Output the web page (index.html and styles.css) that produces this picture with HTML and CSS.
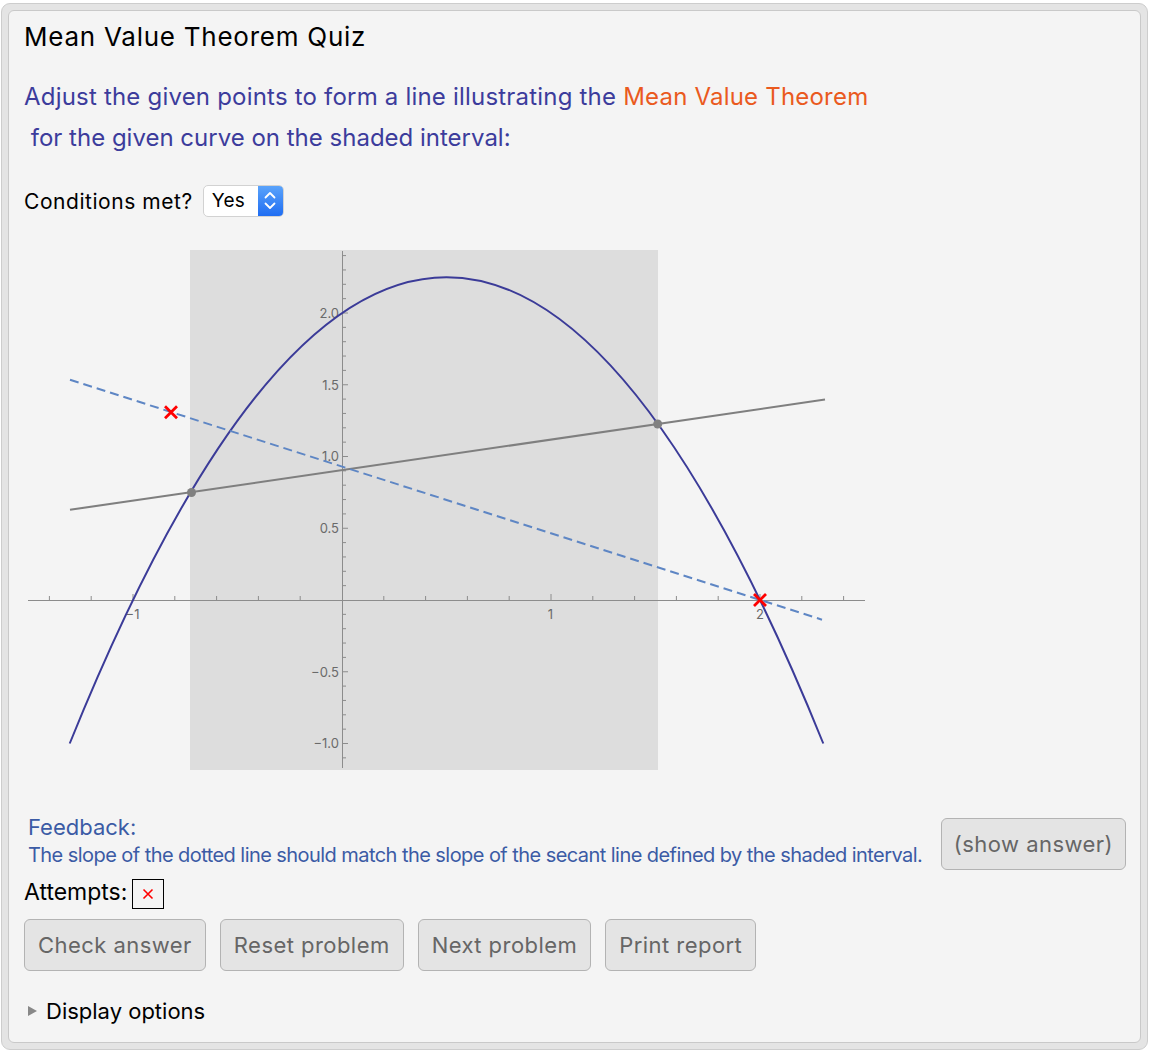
FILE: index.html
```html
<!DOCTYPE html>
<html>
<head>
<meta charset="utf-8">
<title>Mean Value Theorem Quiz</title>
<link rel="stylesheet" href="styles.css">
</head>
<body>
<div class="frame">
  <div class="panel">
    <h1 class="title">Mean Value Theorem Quiz</h1>
    <p class="intro"><span class="intro-first">Adjust the given points to form a line illustrating the <span class="mvt">Mean Value Theorem</span></span><br>&nbsp;for the given curve on the shaded interval:</p>
    <div class="conditions">
      <span class="cond-label">Conditions met?</span>
      <div class="select">
        <span class="sel-val">Yes</span>
        <span class="stepper">
          <svg width="12" height="22" viewBox="0 0 12 22"><path d="M1.5 7.5 6 3l4.5 4.5M1.5 13.5 6 18l4.5-4.5" fill="none" stroke="#fff" stroke-width="1.8" stroke-linecap="round" stroke-linejoin="round"/></svg>
        </span>
      </div>
    </div>
    <svg class="plot" width="860" height="530" viewBox="24 245 860 530">
      <rect x="190" y="250" width="468" height="520" fill="#dddddd"/>
      <g stroke="#8c8c8c" stroke-width="1" fill="none">
        <path d="M28 600.5H865M342.5 251V768"/>
        <path d="M49.4 600v-4M91.2 600v-4M133 600v-6M174.8 600v-4M216.6 600v-4M258.4 600v-4M300.2 600v-4M383.8 600v-4M425.6 600v-4M467.4 600v-4M509.2 600v-4M551 600v-6M592.8 600v-4M634.6 600v-4M676.4 600v-4M718.2 600v-4M760 600v-6M801.8 600v-4M843.6 600v-4"/>
        <path d="M342.5 757.85h3.5M342.5 743.5h5.5M342.5 729.15h3.5M342.5 714.8h3.5M342.5 700.45h3.5M342.5 686.1h3.5M342.5 671.75h5.5M342.5 657.4h3.5M342.5 643.05h3.5M342.5 628.7h3.5M342.5 614.35h3.5M342.5 585.65h3.5M342.5 571.3h3.5M342.5 556.95h3.5M342.5 542.6h3.5M342.5 528.25h5.5M342.5 513.9h3.5M342.5 499.55h3.5M342.5 485.2h3.5M342.5 470.85h3.5M342.5 456.5h5.5M342.5 442.15h3.5M342.5 427.8h3.5M342.5 413.45h3.5M342.5 399.1h3.5M342.5 384.75h5.5M342.5 370.4h3.5M342.5 356.05h3.5M342.5 341.7h3.5M342.5 327.35h3.5M342.5 313h5.5M342.5 298.65h3.5M342.5 284.3h3.5M342.5 269.95h3.5M342.5 255.6h3.5"/>
      </g>
      <g class="tick-label" text-anchor="end">
        <text x="339" y="317.5">2.0</text>
        <text x="339" y="389.5">1.5</text>
        <text x="339" y="461">1.0</text>
        <text x="339" y="532.5">0.5</text>
        <text x="339" y="676.5">−0.5</text>
        <text x="339" y="748">−1.0</text>
      </g>
      <g class="tick-label" text-anchor="middle">
        <text x="132.5" y="618.5">−1</text>
        <text x="550.5" y="618.5">1</text>
        <text x="760" y="618.5">2</text>
      </g>
      <path d="M69.72 743.5Q446.5 -189.25 823.29 743.5" fill="none" stroke="#3b3b98" stroke-width="2"/>
      <path d="M70 509.8L825 399.6" stroke="#7f7f7f" stroke-width="2" fill="none"/>
      <path d="M70 379.8L822 619.7" stroke="#5e86c4" stroke-width="2" stroke-dasharray="9 5" fill="none"/>
      <circle cx="191.5" cy="492.5" r="4.5" fill="#808080"/>
      <circle cx="657.7" cy="424" r="4.5" fill="#808080"/>
      <g stroke="#ff0000" stroke-width="2.8" stroke-linecap="butt">
        <path d="M165 406.3l12 12M177 406.3l-12 12"/>
        <path d="M754 594l12 12M766 594l-12 12"/>
      </g>
    </svg>
    <div class="feedback-row">
      <div class="feedback">
        <div class="fb-label">Feedback:</div>
        <div class="fb-msg">The slope of the dotted line should match the slope of the secant line defined by the shaded interval.</div>
      </div>
      <button class="btn show">(show answer)</button>
    </div>
    <div class="attempts">
      <span>Attempts:</span>
      <span class="attempt-box"><svg width="12" height="12" viewBox="0 0 12 12"><path d="M1.5 1.5l9 9M10.5 1.5l-9 9" stroke="#ff0000" stroke-width="1.6"/></svg></span>
    </div>
    <div class="actions">
      <button class="btn">Check answer</button>
      <button class="btn">Reset problem</button>
      <button class="btn">Next problem</button>
      <button class="btn">Print report</button>
    </div>
    <div class="display"><span class="tri"></span>Display options</div>
  </div>
</div>
</body>
</html>
```
FILE: styles.css
```css
* { box-sizing: border-box; }
html, body { margin: 0; padding: 0; background: #ffffff; }
body { font-family: Inter, "Noto Sans", sans-serif; color: #000; }

.frame {
  margin: 3px 2px 3px 1px;
  border: 1px solid #cdcdcd;
  border-radius: 9px;
  background: #e4e4e4;
  padding: 6px;
}
.panel {
  border: 1px solid #c9c9c9;
  border-radius: 6px;
  background: #f4f4f4;
  padding: 10px 14px 17px 15px;
}
.title {
  margin: 0;
  font-size: 26px;
  line-height: 32px;
  font-weight: 400;
  letter-spacing: 0.75px;
}
.intro {
  margin: 23px 0 0;
  font-size: 24px;
  line-height: 41px;
  color: #3c3c9c;
  white-space: nowrap;
}
.intro-first { letter-spacing: 0.2px; }
.mvt { color: #ea5a1e; }

.conditions {
  display: flex;
  align-items: center;
  gap: 10px;
  margin-top: 27px;
  height: 32px;
  font-size: 21px;
  letter-spacing: 0.55px;
}
.select {
  display: flex;
  width: 81px;
  height: 32px;
  background: #fff;
  border: 1px solid #d2d2d2;
  border-radius: 5px;
  overflow: hidden;
  letter-spacing: 0.3px;
}
.sel-val { flex: 1; font-size: 19px; line-height: 30px; padding-left: 8px; }
.stepper {
  width: 25px;
  background: linear-gradient(#5aa3fb, #1f6df2);
  display: flex;
  align-items: center;
  justify-content: center;
}

.plot { display: block; margin-top: 28px; }
.tick-label text { font-family: Inter, "Noto Sans", sans-serif; font-size: 13px; fill: #6a6a6a; }

.feedback-row {
  display: flex;
  justify-content: space-between;
  align-items: flex-end;
  margin-top: 38px;
  padding-left: 4px;
}
.fb-label { font-size: 22px; line-height: 28px; color: #3b5ba5; }
.fb-msg { font-size: 20px; line-height: 28px; color: #3b5ba5; letter-spacing: -0.56px; }

.btn {
  font-family: inherit;
  font-size: 22px;
  height: 52px;
  padding: 0 13px;
  color: #666;
  background: #e4e4e4;
  border: 1px solid #b3b3b3;
  border-radius: 6px;
  letter-spacing: 0.45px;
}
.show { margin-bottom: -1px; padding: 0 12px; }

.attempts {
  display: flex;
  align-items: flex-start;
  gap: 5px;
  margin-top: 10px;
  font-size: 23px;
  line-height: 26px;
}
.attempt-box {
  width: 32px;
  height: 30px;
  border: 1px solid #000;
  display: flex;
  align-items: center;
  justify-content: center;
}

.actions { display: flex; gap: 14px; margin-top: 10px; }

.display {
  display: flex;
  align-items: center;
  margin-top: 26px;
  padding-left: 4px;
  font-size: 22px;
  line-height: 28px;
}
.tri {
  width: 0;
  height: 0;
  border-top: 5px solid transparent;
  border-bottom: 5px solid transparent;
  border-left: 9px solid #888;
  margin-right: 9px;
}
```
